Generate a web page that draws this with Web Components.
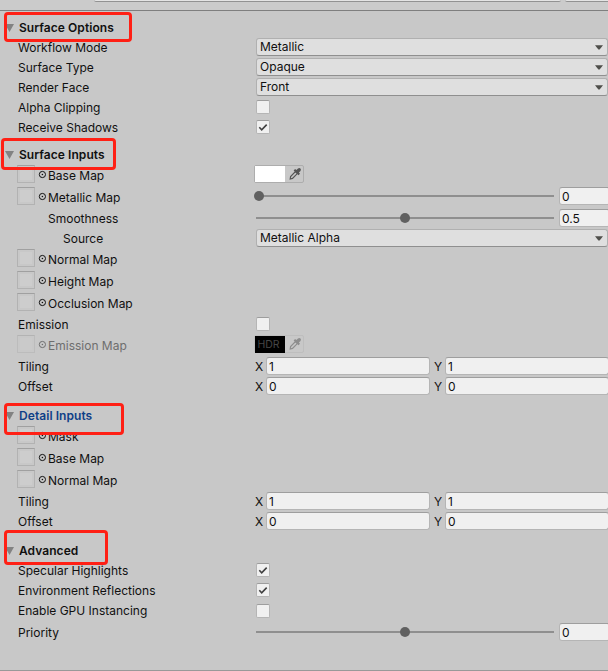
<!DOCTYPE html>
<html lang="en">
<head>
<meta charset="utf-8">
<title>Material Inspector</title>
<style>
html,body{margin:0;height:100%;overflow:hidden;background:#c8c8c8}
body{font:12px/18px Inter,"Liberation Sans",sans-serif;color:#101010}
</style>
</head>
<body>
<material-inspector></material-inspector>
<script>
function define(name, html, setup) {
  const template = document.createElement('template');
  template.innerHTML = html;
  customElements.define(name, class extends HTMLElement {
    connectedCallback() {
      if (this.shadowRoot) return;
      const root = this.attachShadow({ mode: 'open' });
      root.append(template.content.cloneNode(true));
      if (setup) setup(this, root);
    }
  });
}

define('drop-down', `<style>
:host{display:flex;box-sizing:border-box;width:352px;height:18px;margin-left:256px;padding:0 4px 0 3px;align-items:center;justify-content:space-between;background:#dfdfdf;border:1px solid #b0b0b0;border-bottom-color:#8f8f8f;border-radius:3px;line-height:16px}
svg{display:block}
</style><span><slot></slot></span><svg width="8" height="5" viewBox="0 0 8 5"><path d="M0 .3h8L4.6 4.4H3.4Z" fill="#4f4f4b"/></svg>`);

define('check-box', `<style>
:host{display:block;box-sizing:border-box;width:14px;height:14px;margin:2px 0 0 256px;background:#f0f0f0;border:1px solid #b5b5b5;border-top-color:#9d9d9d;border-radius:2px}
:host([low]){margin-top:3px}
svg{display:none}
:host([checked]) svg{display:block}
</style><svg width="12" height="12" viewBox="0 0 12 12"><path d="M2.3 6.3 4.7 8.8 9.7 3.6" fill="none" stroke="#404040" stroke-width="1.6"/></svg>`);

define('text-field', `<style>
:host{display:block;box-sizing:border-box;height:18px;padding-left:2px;background:#f0f0f0;border:1px solid #b5b5b5;border-top-color:#9e9e9e;border-radius:3px;line-height:18px}
</style><slot></slot>`);

define('value-slider', `<style>
:host{display:grid;grid-template-columns:298px 51px;column-gap:5px;margin-left:256px;height:18px;align-items:center}
.track{display:flex;align-items:center;height:2px;background:#8f8f8f}
.thumb{flex:none;width:10px;height:10px;border-radius:50%;background:#606060;margin-left:var(--at)}
</style><div class="track"><div class="thumb"></div></div><text-field><slot></slot></text-field>`,
(host, root) => root.querySelector('.thumb').style.setProperty('--at', host.getAttribute('at')));

define('vector-field', `<style>
:host{display:grid;grid-template-columns:11px 164px 4px 11px 164px;margin-left:255px;height:18px}
span{padding-top:1px}
.y{grid-column:4}
</style><span>X</span><text-field><slot></slot></text-field><span class="y">Y</span><text-field><slot name="y"></slot></text-field>`);

define('color-field', `<style>
:host{display:grid;grid-template-columns:30px 18px;box-sizing:border-box;width:50px;height:18px;margin-left:254px;border:1px solid #adadad;border-radius:2px}
.swatch{background:#fff;font-size:10.5px;line-height:17px;text-align:center;color:#464646;padding-right:3px;box-sizing:border-box}
:host([hdr]){border-color:#bebebe}
:host([hdr]) .swatch{background:#000}
:host([hdr]) svg{opacity:.5}
svg{display:block;margin:1px 0 0 3px}
</style><div class="swatch"><slot></slot></div><svg width="14" height="14" viewBox="0 0 14 14"><path d="M2.2 12 2.6 9.5 7.4 4.7 9.3 6.6 4.5 11.4Z" fill="none" stroke="#555" stroke-width="1.2"/><path d="m5.6 3.4 1.5-1.3 1.3 1L10 1.5Q11.4.6 12.4 1.5T12.5 3.9L10.9 5.5 12 6.7 10.5 8.2Z" fill="#555"/></svg>`);

define('texture-slot', `<style>
:host{display:flex;align-items:flex-start;height:22px;padding-left:17px}
.thumb{box-sizing:border-box;width:18px;height:18px;border:1px solid #b2b2b2;border-top-color:#a0a0a0;box-shadow:inset 0 0 0 2px #c8c8c8;background:#cdcdcd}
svg{display:block;margin:5px 2px 0 3px}
.name{padding-top:2px}
:host([disabled]){color:#6e6e6e}
:host([disabled]) .thumb{opacity:.5}
</style><div class="thumb"></div><svg width="8" height="9" viewBox="0 0 8 9"><circle cx="4.4" cy="4.5" r="3.1" fill="none" stroke="currentColor"/><circle cx="4.4" cy="4.5" r=".8" fill="currentColor"/></svg><div class="name"><slot></slot></div>`);

define('property-row', `<style>
:host{display:grid;grid-template-columns:100%;grid-template-rows:100%;height:var(--h,20px)}
.label,.control{grid-area:1/1}
.label{padding:1px 0 0 var(--indent,18px)}
:host([map]) .label{padding:0}
</style><div class="label"><slot></slot></div><div class="control"><slot name="control"></slot></div>`);

define('section-header', `<style>
:host{display:flex;position:relative;box-sizing:border-box;height:var(--h);padding:0 0 1px 5px;align-items:flex-end;font-weight:600;letter-spacing:.06px}
svg{display:block;margin:0 5px 5px 0}
.frame{position:absolute;box-sizing:border-box;border:3px solid #ff2015;border-radius:4px;z-index:1;left:var(--x,4px);top:var(--t);width:var(--w);height:var(--fh)}
</style><svg width="9" height="8" viewBox="0 0 9 8"><path d="M0 0h9L4.5 8Z" fill="#828282"/></svg><span><slot></slot></span><div class="frame"></div>`);

define('material-inspector', `<style>
:host{display:block;width:608px;height:671px;overflow:hidden;background:#c8c8c8}
.bar{display:grid;grid-template-columns:467px 60px;column-gap:4px;padding-left:94px;box-sizing:border-box;height:11px;background:#cbcbcb;border-bottom:1px solid #7f7f7f}
.bar i{height:1px;background:#e4e4e4;border-bottom:1px solid #929292;border-radius:0 0 3px 3px}
main{box-sizing:border-box;height:660px;border-bottom:1px solid #999}
</style>
<div class="bar"><i></i><i></i></div>
<main>
<section-header style="--h:27px;--t:1px;--w:128px;--fh:30px">Surface Options</section-header>
<property-row>Workflow Mode<drop-down slot="control">Metallic</drop-down></property-row>
<property-row>Surface Type<drop-down slot="control">Opaque</drop-down></property-row>
<property-row>Render Face<drop-down slot="control">Front</drop-down></property-row>
<property-row>Alpha Clipping<check-box slot="control"></check-box></property-row>
<property-row>Receive Shadows<check-box slot="control" checked></check-box></property-row>
<section-header style="--h:27px;--x:1px;--t:0px;--w:115px;--fh:32px">Surface Inputs</section-header>
<property-row map style="--h:22px"><texture-slot>Base Map</texture-slot><color-field slot="control"></color-field></property-row>
<property-row map style="--h:22px"><texture-slot>Metallic Map</texture-slot><value-slider slot="control" at="-2px">0</value-slider></property-row>
<property-row style="--indent:48px">Smoothness<value-slider slot="control" at="144px">0.5</value-slider></property-row>
<property-row style="--indent:63px">Source<drop-down slot="control">Metallic Alpha</drop-down></property-row>
<texture-slot>Normal Map</texture-slot>
<texture-slot>Height Map</texture-slot>
<texture-slot>Occlusion Map</texture-slot>
<property-row>Emission<check-box slot="control"></check-box></property-row>
<property-row map style="--h:22px"><texture-slot disabled>Emission Map</texture-slot><color-field slot="control" hdr>HDR</color-field></property-row>
<property-row>Tiling<vector-field slot="control">1<span slot="y">1</span></vector-field></property-row>
<property-row>Offset<vector-field slot="control">0<span slot="y">0</span></vector-field></property-row>
<section-header style="--h:29px;--t:6px;--w:120px;--fh:32px"><span style="color:#0f3f87">Detail Inputs</span></section-header>
<texture-slot>Mask</texture-slot>
<texture-slot>Base Map</texture-slot>
<texture-slot>Normal Map</texture-slot>
<property-row>Tiling<vector-field slot="control">1<span slot="y">1</span></vector-field></property-row>
<property-row>Offset<vector-field slot="control">0<span slot="y">0</span></vector-field></property-row>
<section-header style="--h:29px;--t:-2px;--w:104px;--fh:35px">Advanced</section-header>
<property-row>Specular Highlights<check-box slot="control" checked></check-box></property-row>
<property-row>Environment Reflections<check-box slot="control" checked></check-box></property-row>
<property-row style="--h:22px">Enable GPU Instancing<check-box slot="control" low></check-box></property-row>
<property-row>Priority<value-slider slot="control" at="144px">0</value-slider></property-row>
</main>`);
</script>
</body>
</html>
